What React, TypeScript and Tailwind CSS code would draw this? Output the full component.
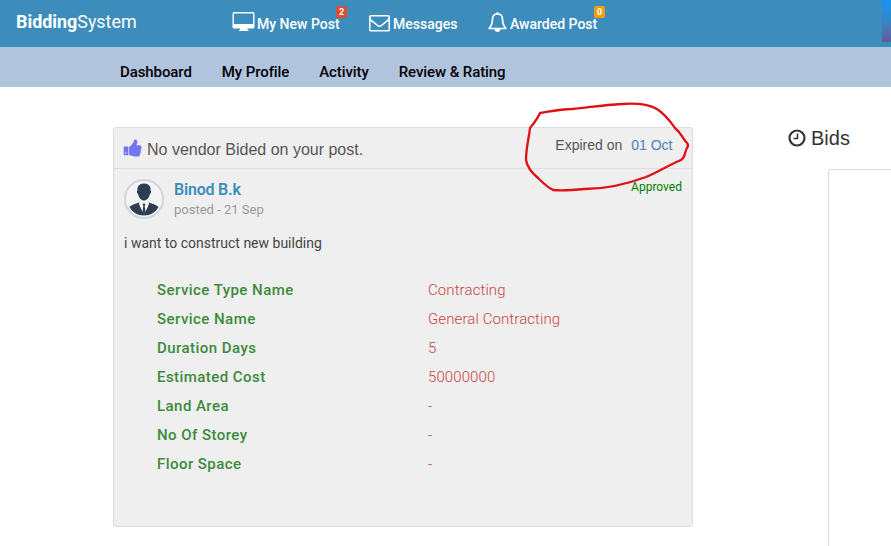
import type { ReactNode } from 'react';

const details = [
  ['Service Type Name', 'Contracting'],
  ['Service Name', 'General Contracting'],
  ['Duration Days', '5'],
  ['Estimated Cost', '50000000'],
  ['Land Area', '-'],
  ['No Of Storey', '-'],
  ['Floor Space', '-'],
];

function DesktopIcon() {
  return (
    <svg className="h-[20px] w-[23px] shrink-0" viewBox="0 0 23 20" fill="none">
      <path fill="#fff" fillRule="evenodd" d="M2 0H21Q22.500 0 22.500 1.500V15Q22.500 16.500 21 16.500H15.500V18H16.500V19H7V18H8V16.500H2Q.500 16.500 .500 15V1.500Q.500 0 2 0ZM1.900 1.400V12H21.100V1.400Z" />
    </svg>
  );
}

function EnvelopeIcon() {
  return (
    <svg className="h-[21px] w-[21px] shrink-0" viewBox="0 0 1792 1792" fill="currentColor">
      <path d="M1664 1504v-768q-32 36-69 66-268 206-426 338-51 43-83 67t-86.500 48.500-102.500 24.500h-2q-48 0-102.500-24.500t-86.500-48.500-83-67q-158-132-426-338-37-30-69-66v768q0 13 9.500 22.500t22.500 9.500h1472q13 0 22.500-9.500t9.500-22.500zm0-1051v-24.500l-.5-13-3-12.500-5.500-9-9-7.500-14-2.500h-1472q-13 0-22.500 9.500t-9.500 22.500q0 168 147 284 193 152 401 317 6 5 35 29.500t46 37.500 44.500 31.500 50.500 27.500 43 9h2q20 0 43-9t50.500-27.500 44.500-31.500 46-37.500 35-29.500q208-165 401-317 54-43 100.500-115.500t46.500-131.500zm128-37v1088q0 66-47 113t-113 47h-1472q-66 0-113-47t-47-113v-1088q0-66 47-113t113-47h1472q66 0 113 47t47 113z" />
    </svg>
  );
}

function BellIcon() {
  return (
    <svg className="h-[21px] w-[19px] shrink-0" viewBox="0 0 19 21" fill="none">
      <path stroke="#fff" strokeWidth="1.700" strokeLinejoin="round" d="M9.500 2C6.300 2 4.600 4.300 4.500 7C4.400 11 3.500 14 1.100 16.500H17.900C15.500 14 14.600 11 14.500 7C14.400 4.300 12.700 2 9.500 2Z" />
      <path fill="#fff" d="M8.500 1a1 1 0 0 1 2 0v1h-2ZM6.500 17h6c0 1.800-1.200 3-3 3s-3-1.200-3-3Z" />
    </svg>
  );
}

function ThumbIcon() {
  return (
    <svg className="h-[20px] w-[20px] shrink-0" viewBox="0 0 1792 1792" fill="#7474f5">
      <path d="M320 1344q0-26-19-45t-45-19q-27 0-45.500 19t-18.500 45q0 27 18.500 45.500t45.500 18.500q26 0 45-18.500t19-45.500zm160-512v640q0 26-19 45t-45 19h-288q-26 0-45-19t-19-45v-640q0-26 19-45t45-19h288q26 0 45 19t19 45zm1184 0q0 86-55 149 15 44 15 76 3 76-43 137 17 56 0 117-15 57-54 94 9 112-49 181-64 76-197 78h-129q-66 0-144-15.500t-121.500-29-120.500-39.500q-123-43-158-44-26-1-45-19.500t-19-44.500v-641q0-25 18-43.500t43-20.500q24-2 76-59t101-121q68-87 101-120 18-18 31-48t17.500-48.500 13.500-60.500q7-39 12.500-61t19.500-52 34-50q19-19 45-19 46 0 82.500 10.500t60 26 40 40.500 24 45 12 50 5 45 .5 39q0 38-9.500 76t-19 60-27.500 56q-3 6-10 18t-11 22-8 24h277q78 0 135 57t57 135z" />
    </svg>
  );
}

function Avatar() {
  return (
    <svg className="h-10 w-10 shrink-0" viewBox="0 0 40 40">
      <circle cx="20" cy="20" r="19" fill="#f3f4f5" stroke="#d2d6de" strokeWidth="2" />
      <path fill="#2c3e50" d="M20 4.500c-4.800 0-7 3-6.500 7-1 .3-.7 3 .6 3.700C15 19 17.300 21.500 20 21.500s5-2.500 5.900-6.300c1.300-.7 1.600-3.400.6-3.700.5-4-1.700-7-6.500-7ZM5.500 28c2-2.500 7-3 10-5l4.500 11 4.500-11c3 2 8 2.500 10 5-3 5.500-8 8.500-14.500 8.500S8.500 33.500 5.500 28Z" />
      <path fill="#fff" d="m15.500 23 4.500 2 4.500-2 .5 2-5 11-5-11Z" />
      <path fill="#2c3e50" d="M18.300 24.800h3.400l-1 2.200 1 7-1.700 2-1.700-2 1-7Z" />
    </svg>
  );
}

function Badge({ children, className }: { children: ReactNode; className: string }) {
  return (
    <span className={`absolute flex h-3 w-[11px] items-center justify-center rounded-[2px] text-[9px] leading-none font-bold ${className}`}>
      {children}
    </span>
  );
}

export default function App() {
  return (
    <div className="relative h-[546px] w-[891px] overflow-hidden bg-white font-['Roboto',sans-serif] text-[#333]">
      <header className="flex h-[47px] bg-[#3c8dbc] text-white">
        <div className="w-[232px] pt-[7px] pl-4 text-[17.900px] leading-[30px]">
          <b>Bidding</b>System
        </div>
        <nav className="flex flex-1 pt-3 text-[14px] leading-6 font-medium">
          <a className="relative flex w-[137px] gap-[2px]">
            <DesktopIcon />
            <span>My New Post</span>
            <Badge className="top-[-6px] left-[104px] bg-[#dd4b39]">2</Badge>
          </a>
          <a className="flex w-[119px] gap-[3px]">
            <EnvelopeIcon />
            <span>Messages</span>
          </a>
          <a className="relative flex gap-[3px]">
            <BellIcon />
            <span>Awarded Post</span>
            <Badge className="top-[-6px] left-[106px] bg-[#f39c12]">0</Badge>
          </a>
        </nav>
        <div className="h-[42px] w-[9px] bg-linear-to-b from-[#1593f5] via-[#3186c5] to-[#625b9b]" />
      </header>
      <nav className="flex h-10 gap-[30px] bg-[#b0c4de] pt-[13px] pl-[120px] text-[15px] leading-6 font-medium tracking-[-0.090px] text-black">
        <a>Dashboard</a>
        <a>My Profile</a>
        <a>Activity</a>
        <a>Review &amp; Rating</a>
      </nav>
      <div className="flex">
        <main className="mt-10 ml-[113px] h-[400px] w-[580px] shrink-0 rounded-[3px] border border-[#ddd] bg-[#efefef]">
          <div className="flex h-[41px] items-start justify-between border-b border-[#ddd] pr-[19.500px] pl-[9px]">
            <h2 className="flex gap-1 pt-[10px] font-['Liberation_Sans',sans-serif] text-[16px] leading-6 text-[#555]">
              <ThumbIcon />
              No vendor Bided on your post.
            </h2>
            <div className="flex gap-[9px] pt-[5px] font-['Liberation_Sans',sans-serif] text-[14px] leading-6 text-[#555]">
              Expired on <a className="text-[#4982b8]">01 Oct</a>
            </div>
          </div>
          <div className="flex pt-[10px] pr-[10px] pl-[10px]">
            <Avatar />
            <div className="ml-[10px] flex-1">
              <div className="text-[16px] leading-[22px] font-semibold tracking-[-0.200px] text-[#3c8dbc]">Binod B.k</div>
              <div className="text-[13px] leading-[18px] text-[#999]">posted - 21 Sep</div>
            </div>
            <div className="text-[12px] leading-4 text-[green]">Approved</div>
          </div>
          <p className="pt-[14px] pl-[10px] text-[14px] leading-5 text-[#444]">i want to construct new building</p>
          <dl className="mt-[23px] ml-[43px] text-[15px] leading-[29px]">
            {details.map(([name, value]) => (
              <div key={name} className="flex">
                <dt className="w-[271px] font-medium tracking-[0.450px] text-[#3c8b3c]">{name}</dt>
                <dd className="font-light tracking-[0.100px] text-[#cc4444]">{value}</dd>
              </div>
            ))}
          </dl>
        </main>
        <aside className="w-[198px] shrink-0 pt-[36px] pl-[95px]">
          <h2 className="flex items-center gap-[5px] font-['Liberation_Sans',sans-serif] text-[20px] leading-[30px] text-[#333]">
            <svg className="h-[18px] w-[18px]" viewBox="0 0 18 18" fill="none" stroke="#333">
              <circle cx="9" cy="9" r="7.500" strokeWidth="2.200" />
              <path d="M9.500 4.500V9.500H5.500" strokeWidth="1.500" />
            </svg>
            Bids
          </h2>
          <div className="mt-4 ml-10 h-[400px] w-[100px] rounded-tl-[2px] border border-[#ddd]" />
        </aside>
      </div>
      <svg className="absolute top-[95px] left-[520px] h-[105px] w-[175px]" viewBox="520 95 175 105" fill="none">
        <path stroke="#e01015" strokeWidth="2.300" strokeLinejoin="round" d="M540 113C552 111 561 109 572 109C592 107 603 105 622 104C636 103 648 104 657 109C666 115 670 121 675 128C681 133 683 139 687 143Q689 145 687 148C684 153 686 157 681 160C669 165 656 173 646 177C627 184 604 189 585 189C574 190 563 191 553 190C547 187 542 182 538 178C532 173 527 166 526 160C526 148 529 138 530 128C533 124 537 120 540 113Z" />
      </svg>
    </div>
  );
}
